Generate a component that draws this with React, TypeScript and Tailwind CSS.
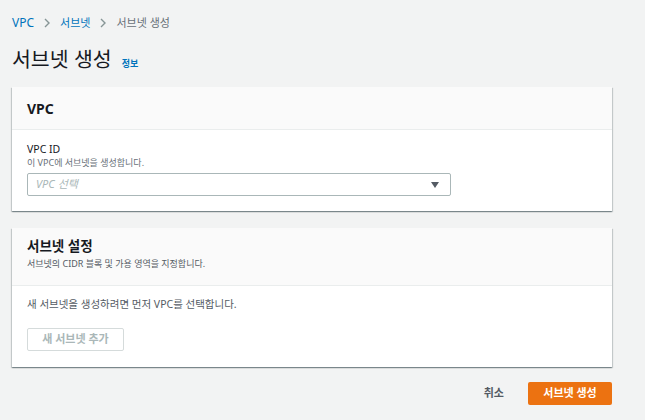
import React from "react";

const font = { fontFamily: '"Noto Sans", "Noto Sans CJK KR", sans-serif' };

function Chevron() {
  return (
    <svg width="8" height="10" viewBox="0 0 8 10" className="mx-[9px]">
      <path d="M2 1l4 4-4 4" fill="none" stroke="#879596" strokeWidth="1.4" />
    </svg>
  );
}

const cardShadow =
  "bg-white shadow-[0_1px_1px_0_rgba(0,28,36,0.3),1px_1px_1px_0_rgba(0,28,36,0.15),-1px_1px_1px_0_rgba(0,28,36,0.15)]";

export default function App() {
  return (
    <div className="w-[645px] h-[420px] bg-[#f2f3f3] overflow-hidden" style={font}>
      <div className="ml-3 w-[600px]">
        <div className="flex items-center h-[14px] mt-[16px] text-[11px] leading-[14px]">
          <span className="text-[#0073bb] text-[12px]">VPC</span>
          <Chevron />
          <span className="text-[#0073bb]">서브넷</span>
          <Chevron />
          <span className="text-[#687078]">서브넷 생성</span>
        </div>
        <div className="flex items-baseline mt-[17px] h-[24px]">
          <h1 className="text-[20.5px] leading-[24px] text-[#16191f]">서브넷 생성</h1>
          <span className="ml-[10px] text-[9px] font-bold text-[#0073bb]">정보</span>
        </div>
        <div className={"mt-[16px] " + cardShadow}>
          <div className="h-[43px] bg-[#fafafa] border-b border-[#eaeded] flex items-center px-[15px]">
            <span className="text-[14px] font-bold text-[#16191f]">VPC</span>
          </div>
          <div className="px-[15px] pt-[12px] pb-[15px]">
            <div className="text-[10.5px] leading-[14px] text-[#16191f]">VPC ID</div>
            <div className="text-[9px] leading-[14px] text-[#687078]">이 VPC에 서브넷을 생성합니다.</div>
            <div className="mt-[3px] w-[424px] h-[23px] border border-[#aab7b8] rounded-[2px] flex items-center justify-between pl-[8px] pr-[11px]">
              <span className="italic text-[11px] text-[#aab7b8]">VPC 선택</span>
              <svg width="8" height="6" viewBox="0 0 8 6">
                <path d="M0 0h8L4 6z" fill="#545b64" />
              </svg>
            </div>
          </div>
        </div>
        <div className={"mt-[17px] " + cardShadow}>
          <div className="h-[58px] bg-[#fafafa] border-b border-[#eaeded] px-[15px] pt-[8px]">
            <div className="text-[13.5px] leading-[20px] font-bold text-[#16191f]">서브넷 설정</div>
            <div className="mt-[1px] text-[9px] leading-[14px] text-[#545b64]">서브넷의 CIDR 블록 및 가용 영역을 지정합니다.</div>
          </div>
          <div className="px-[15px] pt-[10px] pb-[16px]">
            <div className="text-[10.5px] leading-[16px] text-[#545b64]">새 서브넷을 생성하려면 먼저 VPC를 선택합니다.</div>
            <div className="mt-[16px] w-[97px] h-[23px] border border-[#d5dbdb] rounded-[2px] flex items-center justify-center text-[11px] font-bold text-[#aab7b8]">
              새 서브넷 추가
            </div>
          </div>
        </div>
        <div className="flex justify-end items-center mt-[15px] gap-[24px]">
          <span className="text-[11px] font-bold text-[#545b64]">취소</span>
          <div className="w-[84px] h-[23px] bg-[#ec7211] rounded-[2px] flex items-center justify-center text-[11px] font-bold text-white">
            서브넷 생성
          </div>
        </div>
      </div>
    </div>
  );
}
